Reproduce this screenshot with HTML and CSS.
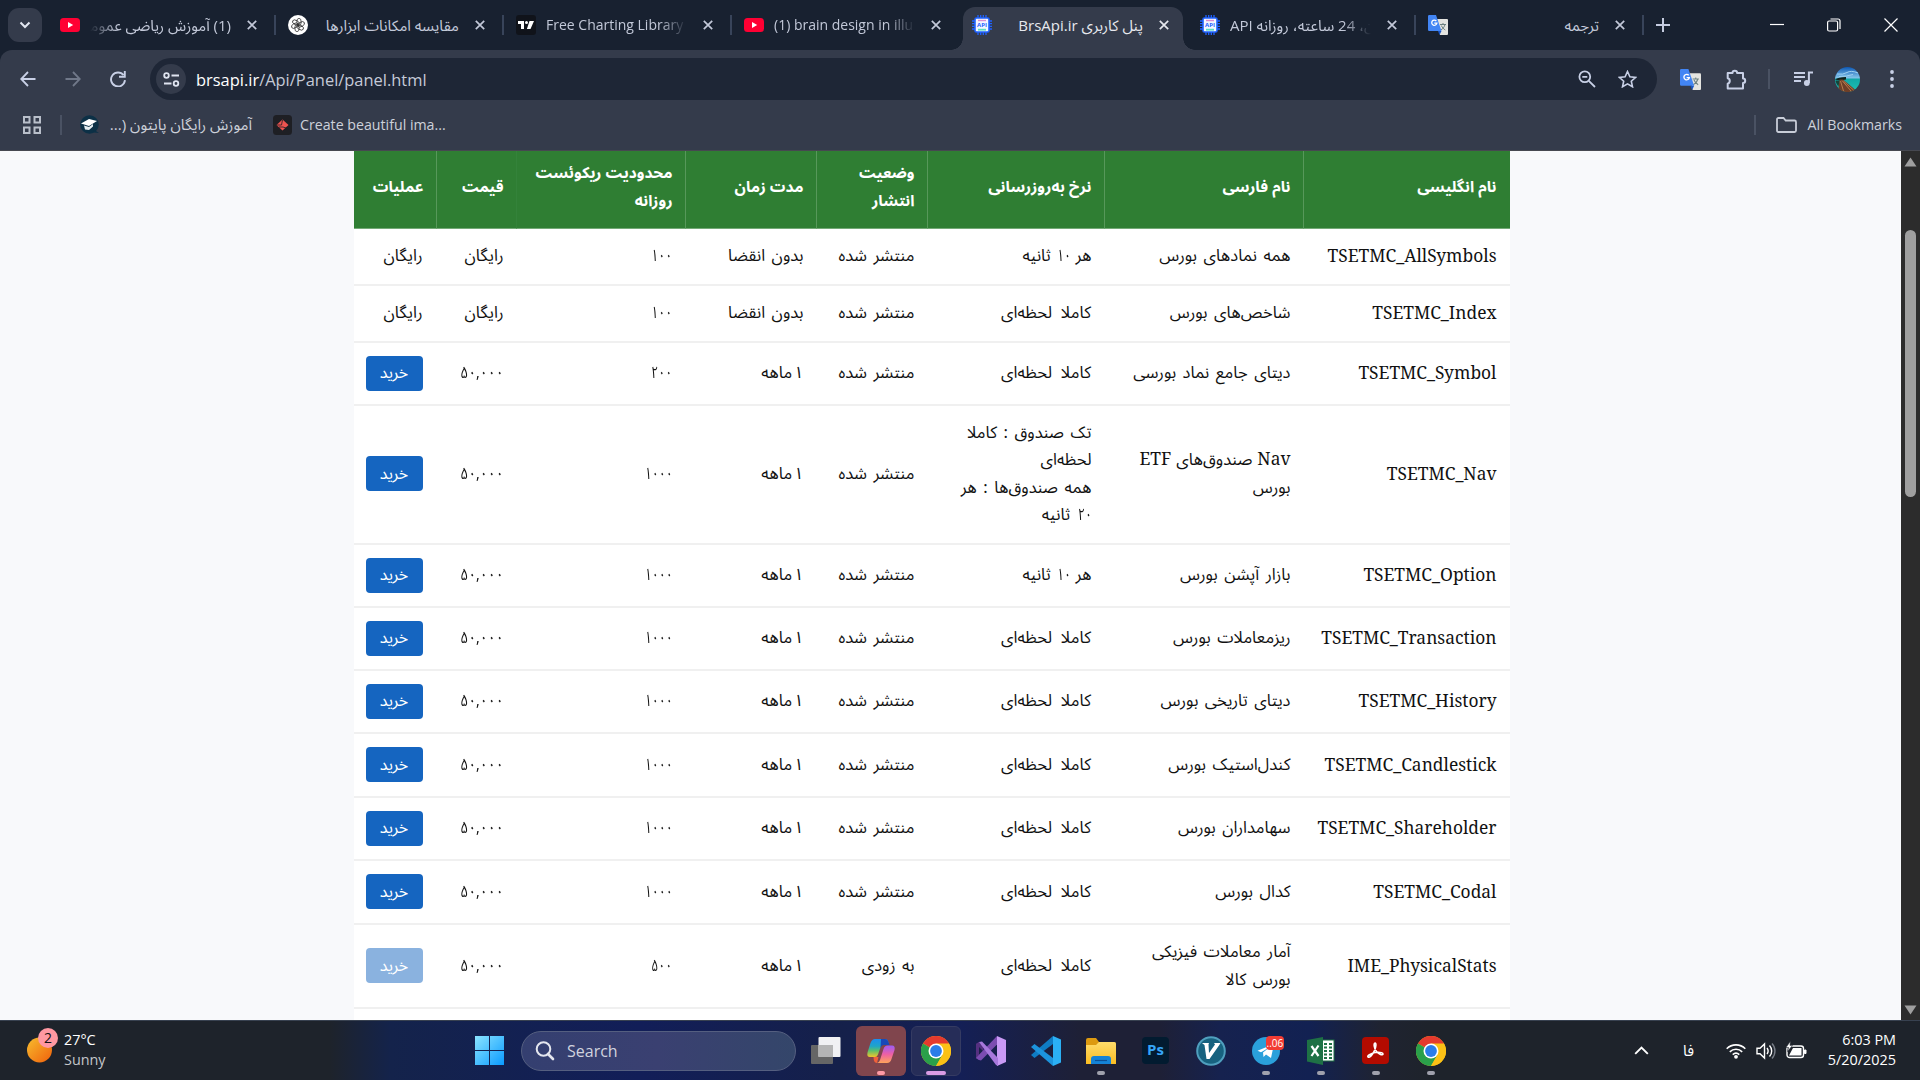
FILE: index.html
```html
<!DOCTYPE html>
<html lang="fa">
<head>
<meta charset="utf-8">
<title>پنل کاربری BrsApi.ir</title>
<link rel="stylesheet" href="styles.css">
</head>
<body>
<svg width="0" height="0" class="defs">
  <defs>
    <linearGradient id="g-win" x1="0" y1="0" x2="1" y2="1"><stop offset="0" stop-color="#8be4ff"/><stop offset="1" stop-color="#0a9bff"/></linearGradient>
    <linearGradient id="g-sun" x1="0" y1="0" x2="1" y2="1"><stop offset="0" stop-color="#f7bd2e"/><stop offset="1" stop-color="#f0600c"/></linearGradient>
    <linearGradient id="g-cop1" x1="0" y1="0" x2="0" y2="1"><stop offset="0" stop-color="#1c8df0"/><stop offset=".4" stop-color="#1fa5c8"/><stop offset=".65" stop-color="#5cc06a"/><stop offset="1" stop-color="#f2c52b"/></linearGradient>
    <linearGradient id="g-cop2" x1="0" y1="0" x2="0" y2="1"><stop offset="0" stop-color="#9b5cf6"/><stop offset=".5" stop-color="#ee5fa5"/><stop offset="1" stop-color="#ffa45a"/></linearGradient>
    <linearGradient id="g-fold" x1="0" y1="0" x2="0" y2="1"><stop offset="0" stop-color="#ffdc6b"/><stop offset="1" stop-color="#fbbd22"/></linearGradient>
    <linearGradient id="g-sky" x1="0" y1="0" x2="0" y2="1"><stop offset="0" stop-color="#0d58b4"/><stop offset=".42" stop-color="#7fc0e8"/><stop offset=".5" stop-color="#12a9a8"/><stop offset="1" stop-color="#1fc0b2"/></linearGradient>
    <symbol id="close" viewBox="0 0 10 10"><path d="M.8.8l8.4 8.4M9.2.8L.8 9.2" fill="none" stroke="currentColor" stroke-width="1.7"/></symbol>
    <symbol id="youtube" viewBox="0 0 20 20"><rect y="3" width="20" height="14" rx="3.5" fill="#ff0033"/><path d="M8 7l5.2 3L8 13z" fill="#fff"/></symbol>
    <symbol id="api" viewBox="0 0 20 20"><path d="M6 0v20M8.7 0v20M11.3 0v20M14 0v20M0 6h20M0 8.7h20M0 11.3h20M0 14h20" stroke="#1f62ff" stroke-width="1.3"/><rect x="3" y="3" width="14" height="14" rx="1.5" fill="#f3f6ff" stroke="#1f62ff" stroke-width="1.6"/><path d="M6 5.5h8" stroke="#d98bd0" stroke-width="1.4"/><path d="M6 14.7h8" stroke="#5ce0c2" stroke-width="1.8"/><text x="10" y="12.2" text-anchor="middle" font-size="6" font-weight="700" fill="#1f62ff">API</text></symbol>
    <symbol id="gtrans" viewBox="0 0 20 20"><path d="M9 4h10a1 1 0 011 1v14a1 1 0 01-1 1h-7z" fill="#e4e4e0"/><path d="M12 9.5h6M15 8v1.5M17 9.5c-.6 2.500-2 4.300-4.500 5.600M13.300 10.500c1 2 2.300 3.500 4 4.500" stroke="#6d8180" stroke-width="1" fill="none"/><path d="M1.200 0H8l5.500 16H1.200A1.200 1.200 0 010 14.800V1.200A1.200 1.200 0 011.200 0z" fill="#4285f4"/><path d="M10 16h3.500L11.500 20z" fill="#1a56c4"/><path d="M8.300 6a2.600 2.600 0 10.600 2.200H6.300" fill="none" stroke="#fff" stroke-width="1.300"/></symbol>
    <symbol id="chrome" viewBox="0 0 30 30"><circle cx="15" cy="15" r="15" fill="#fbc116"/><path d="M15 15L2 7.500A15 15 0 0128 7.500z" fill="#e53a2e"/><path d="M2 7.500A15 15 0 0015 30l6.500-11.200L15 15z" fill="#2aa04a"/><path d="M15 7.500h13A15 15 0 0115 30l6.500-11.200z" fill="#fbc116"/><circle cx="15" cy="15" r="7.500" fill="#fff"/><circle cx="15" cy="15" r="5.900" fill="#2b7de9"/></symbol>
  </defs>
</svg>

<header class="browser">
  <div class="tabstrip">
    <button class="tabsearch"><svg width="12" height="8" viewBox="0 0 12 8"><path d="M1.500 1.500L6 6l4.500-4.500" fill="none" stroke="#e2e6f0" stroke-width="2"/></svg></button>
    <div class="tabs">
      <div class="tab sep"><svg class="fav"><use href="#youtube"/></svg><span class="title rtl fade-l">(1) آموزش ریاضی عمومی</span><svg class="x"><use href="#close"/></svg></div>
      <div class="tab sep"><svg class="fav" viewBox="0 0 20 20"><circle cx="10" cy="10" r="10" fill="#fff"/><g fill="none" stroke="#333" stroke-width=".8"><ellipse cx="11" cy="7" rx="2.200" ry="3.700"/><ellipse cx="11" cy="7" rx="2.200" ry="3.700" transform="rotate(60 10 10)"/><ellipse cx="11" cy="7" rx="2.200" ry="3.700" transform="rotate(120 10 10)"/><ellipse cx="11" cy="7" rx="2.200" ry="3.700" transform="rotate(180 10 10)"/><ellipse cx="11" cy="7" rx="2.200" ry="3.700" transform="rotate(240 10 10)"/><ellipse cx="11" cy="7" rx="2.200" ry="3.700" transform="rotate(300 10 10)"/></g></svg><span class="title rtl">مقایسه امکانات ابزارها</span><svg class="x"><use href="#close"/></svg></div>
      <div class="tab sep"><svg class="fav" viewBox="0 0 20 20"><rect width="20" height="20" rx="3" fill="#10131a"/><path d="M2 6h6v8H5V9H2zM13.500 6H18l-3.500 8h-3.600z" fill="#fff"/><circle cx="10.500" cy="7.500" r="1.500" fill="#fff"/></svg><span class="title latin fade-r">Free Charting Library</span><svg class="x"><use href="#close"/></svg></div>
      <div class="tab"><svg class="fav"><use href="#youtube"/></svg><span class="title latin fade-r">(1) brain design in illu</span><svg class="x"><use href="#close"/></svg></div>
      <div class="tab active"><svg class="fav"><use href="#api"/></svg><span class="title rtl">پنل کاربری BrsApi.ir</span><svg class="x"><use href="#close"/></svg></div>
      <div class="tab sep"><svg class="fav"><use href="#api"/></svg><span class="title rtl head-clip">ن، 24 ساعته، روزانه API</span><svg class="x"><use href="#close"/></svg></div>
      <div class="tab sep"><svg class="fav"><use href="#gtrans"/></svg><span class="title rtl">ترجمه</span><svg class="x"><use href="#close"/></svg></div>
    </div>
    <svg class="newtab" width="14" height="14" viewBox="0 0 14 14"><path d="M7 0v14M0 7h14" stroke="#c5cce0" stroke-width="2"/></svg>
    <div class="winctl">
      <svg width="14" height="14" viewBox="0 0 14 14"><path d="M0 6.500h14" stroke="#fff" stroke-width="1.200"/></svg>
      <svg width="14" height="14" viewBox="0 0 14 14"><g fill="none" stroke="#fff" stroke-width="1.200"><rect x=".6" y="3" width="10" height="10" rx="1.500"/><path d="M3.500 1h7.500a2 2 0 012 2v8"/></g></svg>
      <svg width="14" height="14" viewBox="0 0 14 14"><path d="M.5.5l13 13M13.500.5l-13 13" stroke="#fff" stroke-width="1.200"/></svg>
    </div>
  </div>

  <div class="toolbar">
    <div class="nav">
      <svg width="16" height="16" viewBox="0 0 16 16"><path d="M15.500 8H1.500M8 1L1.200 8 8 15" fill="none" stroke="#c8d0e6" stroke-width="1.800"/></svg>
      <svg width="16" height="16" viewBox="0 0 16 16"><path d="M.5 8h14M8 1l6.800 7L8 15" fill="none" stroke="#707889" stroke-width="1.800"/></svg>
      <svg width="16" height="16" viewBox="0 0 16 16"><path d="M13.600 4.200A7 7 0 1015 9.200" fill="none" stroke="#c8d0e6" stroke-width="1.900"/><path d="M14.800 0v5.800H9" fill="none" stroke="#c8d0e6" stroke-width="1.900"/></svg>
    </div>
    <div class="omnibox">
      <span class="siteinfo"><svg width="17" height="15" viewBox="0 0 17 15"><g fill="none" stroke="#dfe4f0" stroke-width="1.800"><circle cx="3.500" cy="3.500" r="2.300"/><path d="M8.500 3.500H16M1 11.500h7.500"/><circle cx="13" cy="11.500" r="2.300"/></g></svg></span>
      <span class="url"><b>brsapi.ir</b>/Api/Panel/panel.html</span>
      <svg class="zoomic" width="18" height="18" viewBox="0 0 18 18"><g fill="none" stroke="#c8d0e6" stroke-width="1.800"><circle cx="6.800" cy="6.800" r="5.400"/><path d="M10.800 10.800l6.200 6.200M4.300 6.800h5"/></g></svg>
      <svg width="19" height="18" viewBox="0 0 19 18"><path d="M9.500 1.500l2.400 5.300 5.700.6-4.300 3.800 1.200 5.600-5-2.900-5 2.900 1.200-5.600L1.400 7.400l5.700-.6z" fill="none" stroke="#c8d0e6" stroke-width="1.600"/></svg>
    </div>
    <div class="exts">
      <svg width="21" height="21"><use href="#gtrans"/></svg>
      <svg width="21" height="21" viewBox="0 0 21 21"><path d="M2 4h4.500a2.300 2.300 0 014.600 0H17v5.500a2.200 2.200 0 010 4.400v5.600H1.700v-4.800a2.800 2.800 0 000-5.400V4z" fill="none" stroke="#c8d0e6" stroke-width="2" stroke-linejoin="round"/></svg>
      <i class="vr"></i>
      <svg width="20" height="16" viewBox="0 0 20 16"><path d="M0 2h11M0 6h11M0 10h7" stroke="#c8d0e6" stroke-width="1.900"/><circle cx="12.800" cy="12" r="2.900" fill="#c8d0e6"/><path d="M14.900 12V1.500H19" fill="none" stroke="#c8d0e6" stroke-width="2"/></svg>
      <svg class="avatar" width="25" height="25" viewBox="0 0 25 25"><circle cx="12.500" cy="12.500" r="12.500" fill="url(#g-sky)"/><path d="M2 7q6 1 10-1.500T23 6M4 9.500q8 0 14-2" stroke="#9fd0f2" stroke-width="1" fill="none"/><path d="M0 12.500q3-2.500 11-2.500v2.500l-6 1z" fill="#0e211c"/><path d="M1 13.500h3.500l-1 6A12.500 12.500 0 01.5 14z" fill="#17443a"/><path d="M4.500 12.500h3.500L20 22.500a12.500 12.500 0 01-16.500-1z" fill="#6e3f28"/><path d="M5.500 14l3 10M7 13.500l9 10.500M8.500 14l10 9" stroke="#c98a55" stroke-width=".8"/></svg>
      <svg width="4" height="18" viewBox="0 0 4 18"><g fill="#c8d0e6"><circle cx="2" cy="2" r="1.900"/><circle cx="2" cy="9" r="1.900"/><circle cx="2" cy="16" r="1.900"/></g></svg>
    </div>
  </div>

  <div class="bookmarks">
    <svg width="18" height="18" viewBox="0 0 18 18"><g fill="none" stroke="#b9bfca" stroke-width="2"><rect x="1" y="1" width="5.500" height="5.500"/><rect x="11.500" y="1" width="5.500" height="5.500"/><rect x="1" y="11.500" width="5.500" height="5.500"/><rect x="11.500" y="11.500" width="5.500" height="5.500"/></g></svg>
    <i class="vr"></i>
    <svg class="bm1" width="19" height="19" viewBox="0 0 19 19"><circle cx="9.500" cy="9.500" r="9.300" fill="#0c3046"/><path d="M13 14l6 4-5-.500z" fill="#0c3046"/><path d="M1 8.500L9 4l8 2-8 5z" fill="#fff"/><path d="M4 10.500l1 4 4 .5 4-3.500V9l-4 3z" fill="#e6eef2"/></svg>
    <span class="bmtext rtl fa1">آموزش رایگان پایتون (...</span>
    <svg class="bm2" width="19" height="20" viewBox="0 0 19 20"><rect width="19" height="20" rx="3.500" fill="#1e1f24"/><path d="M9.500 4.500l6 5.500-6 5.500L3.500 10z" fill="#ee5350"/><path d="M3.500 10h5l1-5M6 12h4l3 1" stroke="#1e1f24" stroke-width=".8" fill="none"/></svg>
    <span class="bmtext">Create beautiful ima...</span>
    <i class="vr last"></i>
    <svg width="21" height="16" viewBox="0 0 21 16"><path d="M1 2.500Q1 1 2.500 1H7.500l2.200 2.500h8.800Q20 3.500 20 5v8.500q0 1.500-1.500 1.500h-16Q1 15 1 13.500z" fill="none" stroke="#c8cdd8" stroke-width="1.800"/></svg>
    <span class="bmtext all">All Bookmarks</span>
  </div>
</header>

<main class="viewport">
  <div class="page" dir="rtl">
    <table class="plans">
      <colgroup><col class="c1"><col class="c2"><col class="c3"><col class="c4"><col class="c5"><col class="c6"><col class="c7"><col class="c8"></colgroup>
      <thead>
        <tr><th>نام انگلیسی</th><th>نام فارسی</th><th>نرخ به‌روزرسانی</th><th>وضعیت<br>انتشار</th><th>مدت زمان</th><th>محدودیت ریکوئست<br>روزانه</th><th>قیمت</th><th>عملیات</th></tr>
      </thead>
      <tbody>
        <tr class="r57"><td class="en">TSETMC_AllSymbols</td><td>همه نمادهای بورس</td><td class="tight">هر <span class="num inline">۱۰</span> ثانیه</td><td>منتشر شده</td><td>بدون انقضا</td><td><span class="num">۱۰۰</span></td><td>رایگان</td><td>رایگان</td></tr>
        <tr class="r57"><td class="en">TSETMC_Index</td><td>شاخص‌های بورس</td><td class="wide">کاملا لحظه‌ای</td><td>منتشر شده</td><td>بدون انقضا</td><td><span class="num">۱۰۰</span></td><td>رایگان</td><td>رایگان</td></tr>
        <tr><td class="en">TSETMC_Symbol</td><td>دیتای جامع نماد بورسی</td><td class="wide">کاملا لحظه‌ای</td><td>منتشر شده</td><td class="dur">۱ ماهه</td><td><span class="num">۲۰۰</span></td><td><span class="num price">۵۰,۰۰۰</span></td><td><button class="buy">خرید</button></td></tr>
        <tr class="r139"><td class="en">TSETMC_Nav</td><td class="tight"><span class="lat">Nav</span> صندوق‌های <span class="lat">ETF</span><br>بورس</td><td>تک صندوق : کاملا<br>لحظه‌ای<br>همه صندوق‌ها : هر<br><span class="num inline">۲۰</span> ثانیه</td><td>منتشر شده</td><td class="dur">۱ ماهه</td><td><span class="num">۱۰۰۰</span></td><td><span class="num price">۵۰,۰۰۰</span></td><td><button class="buy">خرید</button></td></tr>
        <tr><td class="en">TSETMC_Option</td><td>بازار آپشن بورس</td><td class="tight">هر <span class="num inline">۱۰</span> ثانیه</td><td>منتشر شده</td><td class="dur">۱ ماهه</td><td><span class="num">۱۰۰۰</span></td><td><span class="num price">۵۰,۰۰۰</span></td><td><button class="buy">خرید</button></td></tr>
        <tr><td class="en">TSETMC_Transaction</td><td>ریزمعاملات بورس</td><td class="wide">کاملا لحظه‌ای</td><td>منتشر شده</td><td class="dur">۱ ماهه</td><td><span class="num">۱۰۰۰</span></td><td><span class="num price">۵۰,۰۰۰</span></td><td><button class="buy">خرید</button></td></tr>
        <tr><td class="en">TSETMC_History</td><td>دیتای تاریخی بورس</td><td class="wide">کاملا لحظه‌ای</td><td>منتشر شده</td><td class="dur">۱ ماهه</td><td><span class="num">۱۰۰۰</span></td><td><span class="num price">۵۰,۰۰۰</span></td><td><button class="buy">خرید</button></td></tr>
        <tr class="r64"><td class="en">TSETMC_Candlestick</td><td>کندل‌استیک بورس</td><td class="wide">کاملا لحظه‌ای</td><td>منتشر شده</td><td class="dur">۱ ماهه</td><td><span class="num">۱۰۰۰</span></td><td><span class="num price">۵۰,۰۰۰</span></td><td><button class="buy">خرید</button></td></tr>
        <tr><td class="en">TSETMC_Shareholder</td><td>سهامداران بورس</td><td class="wide">کاملا لحظه‌ای</td><td>منتشر شده</td><td class="dur">۱ ماهه</td><td><span class="num">۱۰۰۰</span></td><td><span class="num price">۵۰,۰۰۰</span></td><td><button class="buy">خرید</button></td></tr>
        <tr class="r64"><td class="en">TSETMC_Codal</td><td>کدال بورس</td><td class="wide">کاملا لحظه‌ای</td><td>منتشر شده</td><td class="dur">۱ ماهه</td><td><span class="num">۱۰۰۰</span></td><td><span class="num price">۵۰,۰۰۰</span></td><td><button class="buy">خرید</button></td></tr>
        <tr class="r84"><td class="en">IME_PhysicalStats</td><td>آمار معاملات فیزیکی<br>بورس کالا</td><td class="wide">کاملا لحظه‌ای</td><td>به زودی</td><td class="dur">۱ ماهه</td><td><span class="num">۵۰۰</span></td><td><span class="num price">۵۰,۰۰۰</span></td><td><button class="buy" disabled>خرید</button></td></tr>
        <tr><td></td><td></td><td></td><td></td><td></td><td></td><td></td><td></td></tr>
      </tbody>
    </table>
  </div>
  <div class="scrollbar">
    <svg width="13" height="10" viewBox="0 0 13 10"><path d="M6.500 0.500L12.500 9.500H.5z" fill="#9f9f9f"/></svg>
    <div class="thumb"></div>
    <svg class="down" width="13" height="10" viewBox="0 0 13 10"><path d="M6.500 9.500L12.500.5H.5z" fill="#9f9f9f"/></svg>
  </div>
</main>

<footer class="taskbar">
  <div class="weather">
    <svg width="32" height="36" viewBox="0 0 32 36"><circle cx="12.500" cy="22" r="12.500" fill="url(#g-sun)"/><circle cx="21" cy="10" r="10" fill="#ff98a2"/><text x="21" y="15" text-anchor="middle" font-size="14" fill="#111">2</text></svg>
    <div class="wtext"><span>27°C</span><span class="dim">Sunny</span></div>
  </div>
  <div class="apps">
    <div class="app start"><svg width="29" height="29" viewBox="0 0 29 29"><path d="M0 0h14v14H0zM15 0h14v14H15zM0 15h14v14H0zM15 15h14v14H15z" fill="url(#g-win)"/></svg></div>
    <div class="search"><svg width="20" height="20" viewBox="0 0 20 20"><g fill="none" stroke="#e4e6ee"><circle cx="8.500" cy="8" r="6.800" stroke-width="2"/><path d="M13 13l5 5" stroke-width="2.600" stroke-linecap="round"/></g></svg>Search</div>
    <div class="app"><svg width="30" height="30" viewBox="0 0 30 30"><rect x="0" y="9" width="22" height="19" rx="1" fill="#666"/><rect x="7.500" y="1" width="22" height="20" rx="1" fill="#f1f1f3"/><rect x="7.500" y="9" width="14.500" height="12" fill="#b5b5b5"/></svg></div>
    <div class="app pink"><svg width="30" height="28" viewBox="0 0 30 28"><path d="M9 2h10q2.500 0 3 2l.5 2h-4q-2.500 0-3.500 3l-3 8.500q-.8 2.500-3 2.500H4q-3.500 0-2.500-4.500l3-9.500Q6 2 9 2z" fill="url(#g-cop1)"/><path d="M15 2h4q2.500 0 3 2l1.500 4h-6q-2 0-3 3z" fill="#1748b8"/><path d="M7.500 20h5l-1.500 6q-2.500 0-3.200-3z" fill="#f0603a"/><path d="M21 26H11q2 0 3-3l3.500-11q1-3.500 4-3.500h4.500q3.500 0 2.500 4.500l-3 9Q24.500 26 21 26z" fill="url(#g-cop2)"/></svg><i class="dot p"></i></div>
    <div class="app on"><svg width="30" height="30"><use href="#chrome"/></svg><i class="dot w"></i></div>
    <div class="app"><svg width="30" height="30" viewBox="0 0 30 30"><path d="M0 8l3-2v18l-3-2z" fill="#553080"/><path d="M3 24l4.500-4V10L3 6 0 8v14z" fill="#553080"/><path d="M3 11v8l4-4z" fill="#1a2048"/><path d="M21 0l9 4v22l-9 4z" fill="#c99af5"/><path d="M21 0v8.500L5 24.500 3 24l-3-2z" fill="#7b4cb0"/><path d="M3 6l3-.5L22 22v8l-2-1z" fill="#a878dc"/></svg></div>
    <div class="app"><svg width="30" height="30" viewBox="0 0 30 30"><path d="M22 0v8L3.500 22 0 19z" fill="#0f7cc4"/><path d="M22 30v-8L3.500 8 0 11z" fill="#1c93dc"/><path d="M22 0l8 3.500v23L22 30z" fill="#2bb0f5"/></svg></div>
    <div class="app"><svg width="30" height="28" viewBox="0 0 30 28"><path d="M0 3q0-2 2-2h8l3 4h15q2 0 2 2v6H0z" fill="#dd9a10"/><path d="M0 8h10l3-3h15q2 0 2 2v20H0z" fill="url(#g-fold)"/><path d="M5 27v-5q0-3 3-3h14q3 0 3 3v5z" fill="#1583d6"/><path d="M9 23.500h12" stroke="#0b4f94" stroke-width="1.200"/></svg><i class="dot"></i></div>
    <div class="app"><svg width="27" height="27" viewBox="0 0 27 27"><rect width="27" height="27" rx="4" fill="#021b30"/><text x="13.500" y="18" text-anchor="middle" font-size="15" font-weight="700" fill="#36a5f8">Ps</text></svg></div>
    <div class="app"><svg width="30" height="30" viewBox="0 0 30 30"><circle cx="15" cy="15" r="13.800" fill="#17627f" stroke="#4f9fbe" stroke-width="2"/><path d="M6 7h7l-.5 1.500L13 17l6-8.500L18 7h6.500L23 9.500 13.500 23h-3L8.500 9z" fill="#fff"/></svg></div>
    <div class="app tg"><svg width="28" height="28" viewBox="0 0 28 28"><circle cx="14" cy="14" r="14" fill="#2aa0db"/><path d="M5.500 13.800L22 7l-3 14-5-3.500-2.500 2.500-.5-4.500L18 10l-9 5.200z" fill="#fff"/></svg><span class="badge">..06</span><i class="dot"></i></div>
    <div class="app"><svg width="28" height="28" viewBox="0 0 28 28"><rect x="14" y="3" width="13" height="21" fill="#fff" stroke="#1e7145" stroke-width="1"/><path d="M17 7h3M22 7h3M17 10.500h3M22 10.500h3M17 14h3M22 14h3M17 17.500h3M22 17.500h3M17 21h3M22 21h3" stroke="#1e7145" stroke-width="2"/><path d="M0 3l16-3v28L0 24.500z" fill="#1e7145"/><path d="M4.500 9l7 10M11.500 8.500l-7 10.500" stroke="#fff" stroke-width="2.200"/></svg><i class="dot"></i></div>
    <div class="app"><svg width="27" height="27" viewBox="0 0 27 27"><rect width="27" height="27" rx="4" fill="#b30b00"/><path d="M6 20c-1.500-1.500 5-4.500 9-4.700 4-.2 6 .6 6 1.700 0 2-4.500 0-6.500-2.500C12 11.500 11.500 6 13 6s1 4-.5 7.500S7.500 21.500 6 20z" fill="none" stroke="#fff" stroke-width="1.600"/></svg><i class="dot"></i></div>
    <div class="app"><svg width="30" height="30"><use href="#chrome"/></svg><i class="dot"></i></div>
  </div>
  <div class="tray">
    <svg width="15" height="9" viewBox="0 0 15 9"><path d="M1.200 7.800L7.500 1.500l6.300 6.300" fill="none" stroke="#fff" stroke-width="1.900"/></svg>
    <span class="lang">فا</span>
    <svg width="20" height="16" viewBox="0 0 20 16"><g fill="none" stroke="#fff" stroke-width="1.600"><path d="M.7 5.800a13 13 0 0118.600 0"/><path d="M3.800 8.800a9 9 0 0112.400 0"/><path d="M6.700 11.600a5 5 0 016.600 0"/></g><circle cx="10" cy="13.800" r="1.900" fill="#fff"/></svg>
    <svg width="20" height="18" viewBox="0 0 20 18"><g fill="none" stroke="#fff" stroke-width="1.400"><path d="M1 6.300h3L8.500 2v14L4 11.700H1z"/><path d="M11 6a5 5 0 010 6"/><path d="M13.500 3.500a8 8 0 010 11"/><path d="M16 1.500a11 11 0 010 15" stroke="#777c86"/></g></svg>
    <svg width="21" height="20" viewBox="0 0 21 20"><rect x="1" y="5" width="16.500" height="11.500" rx="2.500" fill="none" stroke="#fff" stroke-width="1.400"/><path d="M7 7h8.500v7.500h-12.500z" fill="#fff"/><path d="M18.500 9h1.500v3.500h-1.500z" fill="#fff" stroke="#fff"/><path d="M4.500 0L0 6.500h2.500L1.500 10.500 6.500 4.500H4z" fill="#fff" stroke="#1f232d" stroke-width=".6"/></svg>
    <div class="clock"><span>6:03 PM</span><span>5/20/2025</span></div>
  </div>
</footer>
</body>
</html>
```
FILE: styles.css
```css
* { box-sizing: border-box; }
body {
  margin: 0;
  width: 1920px;
  height: 1080px;
  overflow: hidden;
  display: flex;
  flex-direction: column;
  font-family: "Open Sans", "Noto Sans", "Noto Sans Arabic", "DejaVu Sans Condensed", sans-serif;
  background: #f8f9fb;
}
.defs { position: absolute; }
button { border: 0; padding: 0; font-family: inherit; }
.rtl { direction: rtl; text-align: right; }
svg { flex: none; display: block; }

/* browser chrome */
.browser { height: 151px; flex: none; background: #182130; }
.tabstrip { height: 50px; display: flex; align-items: center; }
.tabsearch {
  width: 34px; height: 34px; margin: 0 11px 0 8px; border-radius: 11px;
  background: #343b4b; display: flex; align-items: center; justify-content: center;
}
.tabs { display: flex; width: 1591px; }
.tab {
  flex: 0 0 228px; height: 50px; padding: 0 21.500px 0 7px; display: flex; align-items: center;
  position: relative; color: #c3c9d9; font-size: 15px;
}
.tab.sep::after { content: ""; position: absolute; right: 5px; top: 15px; width: 2px; height: 20px; background: #38445a; }
.fav { width: 20px; height: 20px; }
.tab .title { width: 141px; margin: 0 auto 0 10px; overflow: hidden; white-space: nowrap; line-height: 26px; }
.tab .latin { font-size: 14px; }
.tab .x { width: 10px; height: 10px; margin-right: 3px; }
.fade-l { mask-image: linear-gradient(to right, transparent, #000 28px); }
.fade-r, .head-clip { mask-image: linear-gradient(to left, transparent, #000 28px); }
.tab .head-clip { display: flex; justify-content: flex-end; }
.tab.active { color: #e6e8ee; z-index: 0; }
.tab.active::before {
  content: ""; position: absolute; z-index: -1; left: -2px; right: 10px; top: 7px; bottom: 0;
  background: #343b4b; border-radius: 12px 12px 0 0;
}
.tab.active::after {
  content: ""; position: absolute; z-index: -1; left: -14px; right: -2px; bottom: 0; height: 12px;
  background:
    radial-gradient(circle at 0 0, transparent 11.500px, #343b4b 12px) left / 12px 12px no-repeat,
    radial-gradient(circle at 100% 0, transparent 11.500px, #343b4b 12px) right / 12px 12px no-repeat;
}
.newtab { margin-left: 12px; }
.winctl { margin-left: auto; display: flex; gap: 43px; padding-right: 22px; }

.toolbar {
  height: 57px; padding-top: 8px; background: #343b4b; border-radius: 12px 12px 0 0;
  display: flex; align-items: flex-start;
}
.nav { height: 42px; width: 150px; padding-left: 20px; display: flex; gap: 29px; align-items: center; }
.omnibox {
  width: 1507px; height: 42px; border-radius: 21px; background: #1e2636; padding: 0 20px 0 6px;
  display: flex; align-items: center; color: #c5cad8; font-size: 16.450px;
}
.siteinfo { width: 30px; height: 30px; border-radius: 50%; background: #343b4b; display: flex; align-items: center; justify-content: center; margin-right: 10px; }
.url b { font-weight: 400; color: #fff; }
.zoomic { margin: 0 22px 0 auto; }
.exts { height: 42px; display: flex; align-items: center; padding-left: 23px; width: 263px; }
.exts svg:nth-child(2) { margin-left: 25px; }
.exts .vr { margin: 0 24px 0 21px; }
.avatar { margin: 0 30px 0 21px; }
.vr { width: 2px; height: 20px; background: #4a5263; flex: none; }
.bookmarks {
  height: 44px; background: #343b4b; display: flex; align-items: center; padding: 0 18px 8px 23px;
  color: #cdd1da; font-size: 14.200px; border-bottom: 1px solid #464850;
}
.bookmarks .vr { margin-left: 19px; }
.bm1 { margin: 0 11px 0 18px; }
.fa1 { width: 142px; font-size: 15.100px; padding-bottom: 1px; }
.bm2 { margin: 0 8px 0 21px; }
.bookmarks .last { margin: 0 20px 0 auto; }
.all { margin-left: 10px; }
.bmtext { line-height: 22px; white-space: nowrap; }

/* page */
.viewport { height: 869px; flex: none; display: flex; overflow: hidden; }
.page { width: 1901px; padding-right: 391px; overflow: hidden; }
.plans {
  width: 1156px; table-layout: fixed; border-collapse: separate; border-spacing: 0; background: #fff;
  font-family: "Noto Sans Arabic", "DejaVu Sans Condensed", sans-serif; font-size: 16.500px; color: #111;
}
.c1 { width: 207px; } .c2 { width: 199px; } .c3 { width: 177px; } .c4 { width: 111px; }
.c5 { width: 131px; } .c6 { width: 169px; } .c7 { width: 80px; } .c8 { width: 82px; }
.plans th {
  height: 78px; padding: 0 12.500px 4px; background: #2f7e33; color: #fff; text-align: right; font-size: 15.500px;
  line-height: 27.500px; border-left: 1px solid #57985a; border-bottom: 1px solid #73a976; font-weight: 700; white-space: nowrap;
}
.plans th:last-child { border-left: 0; }
.plans th:nth-child(6) { border-left-color: #34823a; }
.plans td {
  height: 63px; padding: 0 12.500px 1px; border-bottom: 2px solid #f0f0f0; line-height: 27.500px;
  text-align: right; white-space: nowrap; word-spacing: 2.200px;
}
.plans .r57 td { height: 57px; padding-bottom: 2px; }
.plans .r64 td { height: 64px; }
.plans .r139 td { height: 139px; padding-bottom: 2px; }
.plans .r84 td { height: 84px; }
.plans th:first-child, .plans td:first-child { padding-right: 13.500px; }
.plans td:last-child { padding-right: 13.500px; }
.plans .tight { word-spacing: .6px; }
.plans .wide { word-spacing: 4.600px; padding-right: 13px; }
.plans .dur { word-spacing: -2.500px; }
.plans .en, .lat { font-family: "Noto Serif", "DejaVu Serif Condensed", "DejaVu Serif", serif; font-size: 17.400px; }
.lat { line-height: 20px; }
.num { display: inline-block; line-height: 20px; transform: scaleX(.74); transform-origin: right; }
.num.inline { margin-left: -4px; }
.num.price { transform: scaleX(.84); }
.buy {
  display: block; width: 57px; height: 35px; border-radius: 4px; background: #1565c0; color: #fff; font-size: 16px;
}
.buy:disabled { background: #8ab2df; }
.scrollbar { width: 19px; background: #2c2c2c; display: flex; flex-direction: column; align-items: center; padding: 6px 0 5px; }
.thumb { width: 11px; height: 267px; margin-top: 63px; border-radius: 6px; background: #9f9f9f; }
.down { margin-top: auto; }

/* taskbar */
.taskbar {
  height: 60px; flex: none; display: flex; align-items: center; color: #fff; border-top: 1px solid #384150;
  background: linear-gradient(to right, #1e232b 0, #1e232b 330px, #14234b 390px, #121e58 640px, #15204a 840px, #141f56 960px, #1e2036 1080px, #1e2036 1160px, #16224f 1220px, #122152 1310px, #1f2331 1380px, #1e232b 1430px);
}
.weather { width: 461px; padding-left: 27px; display: flex; gap: 5px; align-items: center; }
.weather svg { margin-top: -9px; }
.wtext, .clock { display: flex; flex-direction: column; font-size: 14.400px; line-height: 20px; padding-bottom: 2px; }
.dim { color: #c4c6ca; }
.apps { display: flex; align-items: center; }
.app { width: 50px; height: 50px; margin: 0 2.500px; border-radius: 6px; display: flex; align-items: center; justify-content: center; position: relative; }
.start { padding-left: 2px; }
.search {
  width: 275px; height: 40px; margin: 0 2px 0 5px; border-radius: 20px; border: 1px solid #555f80; padding-left: 13px;
  background: linear-gradient(to right, #343f70, #3a4071 50%, #34466a); display: flex; align-items: center; gap: 12px;
  color: #d0d3df; font-size: 16px;
}
.pink { background: #80454d; }
.on { background: #262d58; border: 1px solid #353b62; }
.dot { position: absolute; bottom: 1px; left: 50%; width: 8px; height: 4px; margin-left: -4px; border-radius: 2px; background: #a0a1ad; }
.dot.p { background: #ff9aa6; }
.dot.w { width: 20px; margin-left: -10px; background: #d99be4; bottom: 0; }
.badge { position: absolute; left: 25px; top: 10px; height: 14px; padding: 0 1px; border-radius: 4px; background: #f23c34; color: #fff; font-size: 10px; line-height: 14px; }
.tray { margin-left: auto; display: flex; align-items: center; padding-right: 24px; }
.lang { margin: 0 32px 0 34px; font-size: 15px; }
.tray svg:nth-of-type(3) { margin: 0 10px; }
.clock { width: 89px; text-align: right; }
```
